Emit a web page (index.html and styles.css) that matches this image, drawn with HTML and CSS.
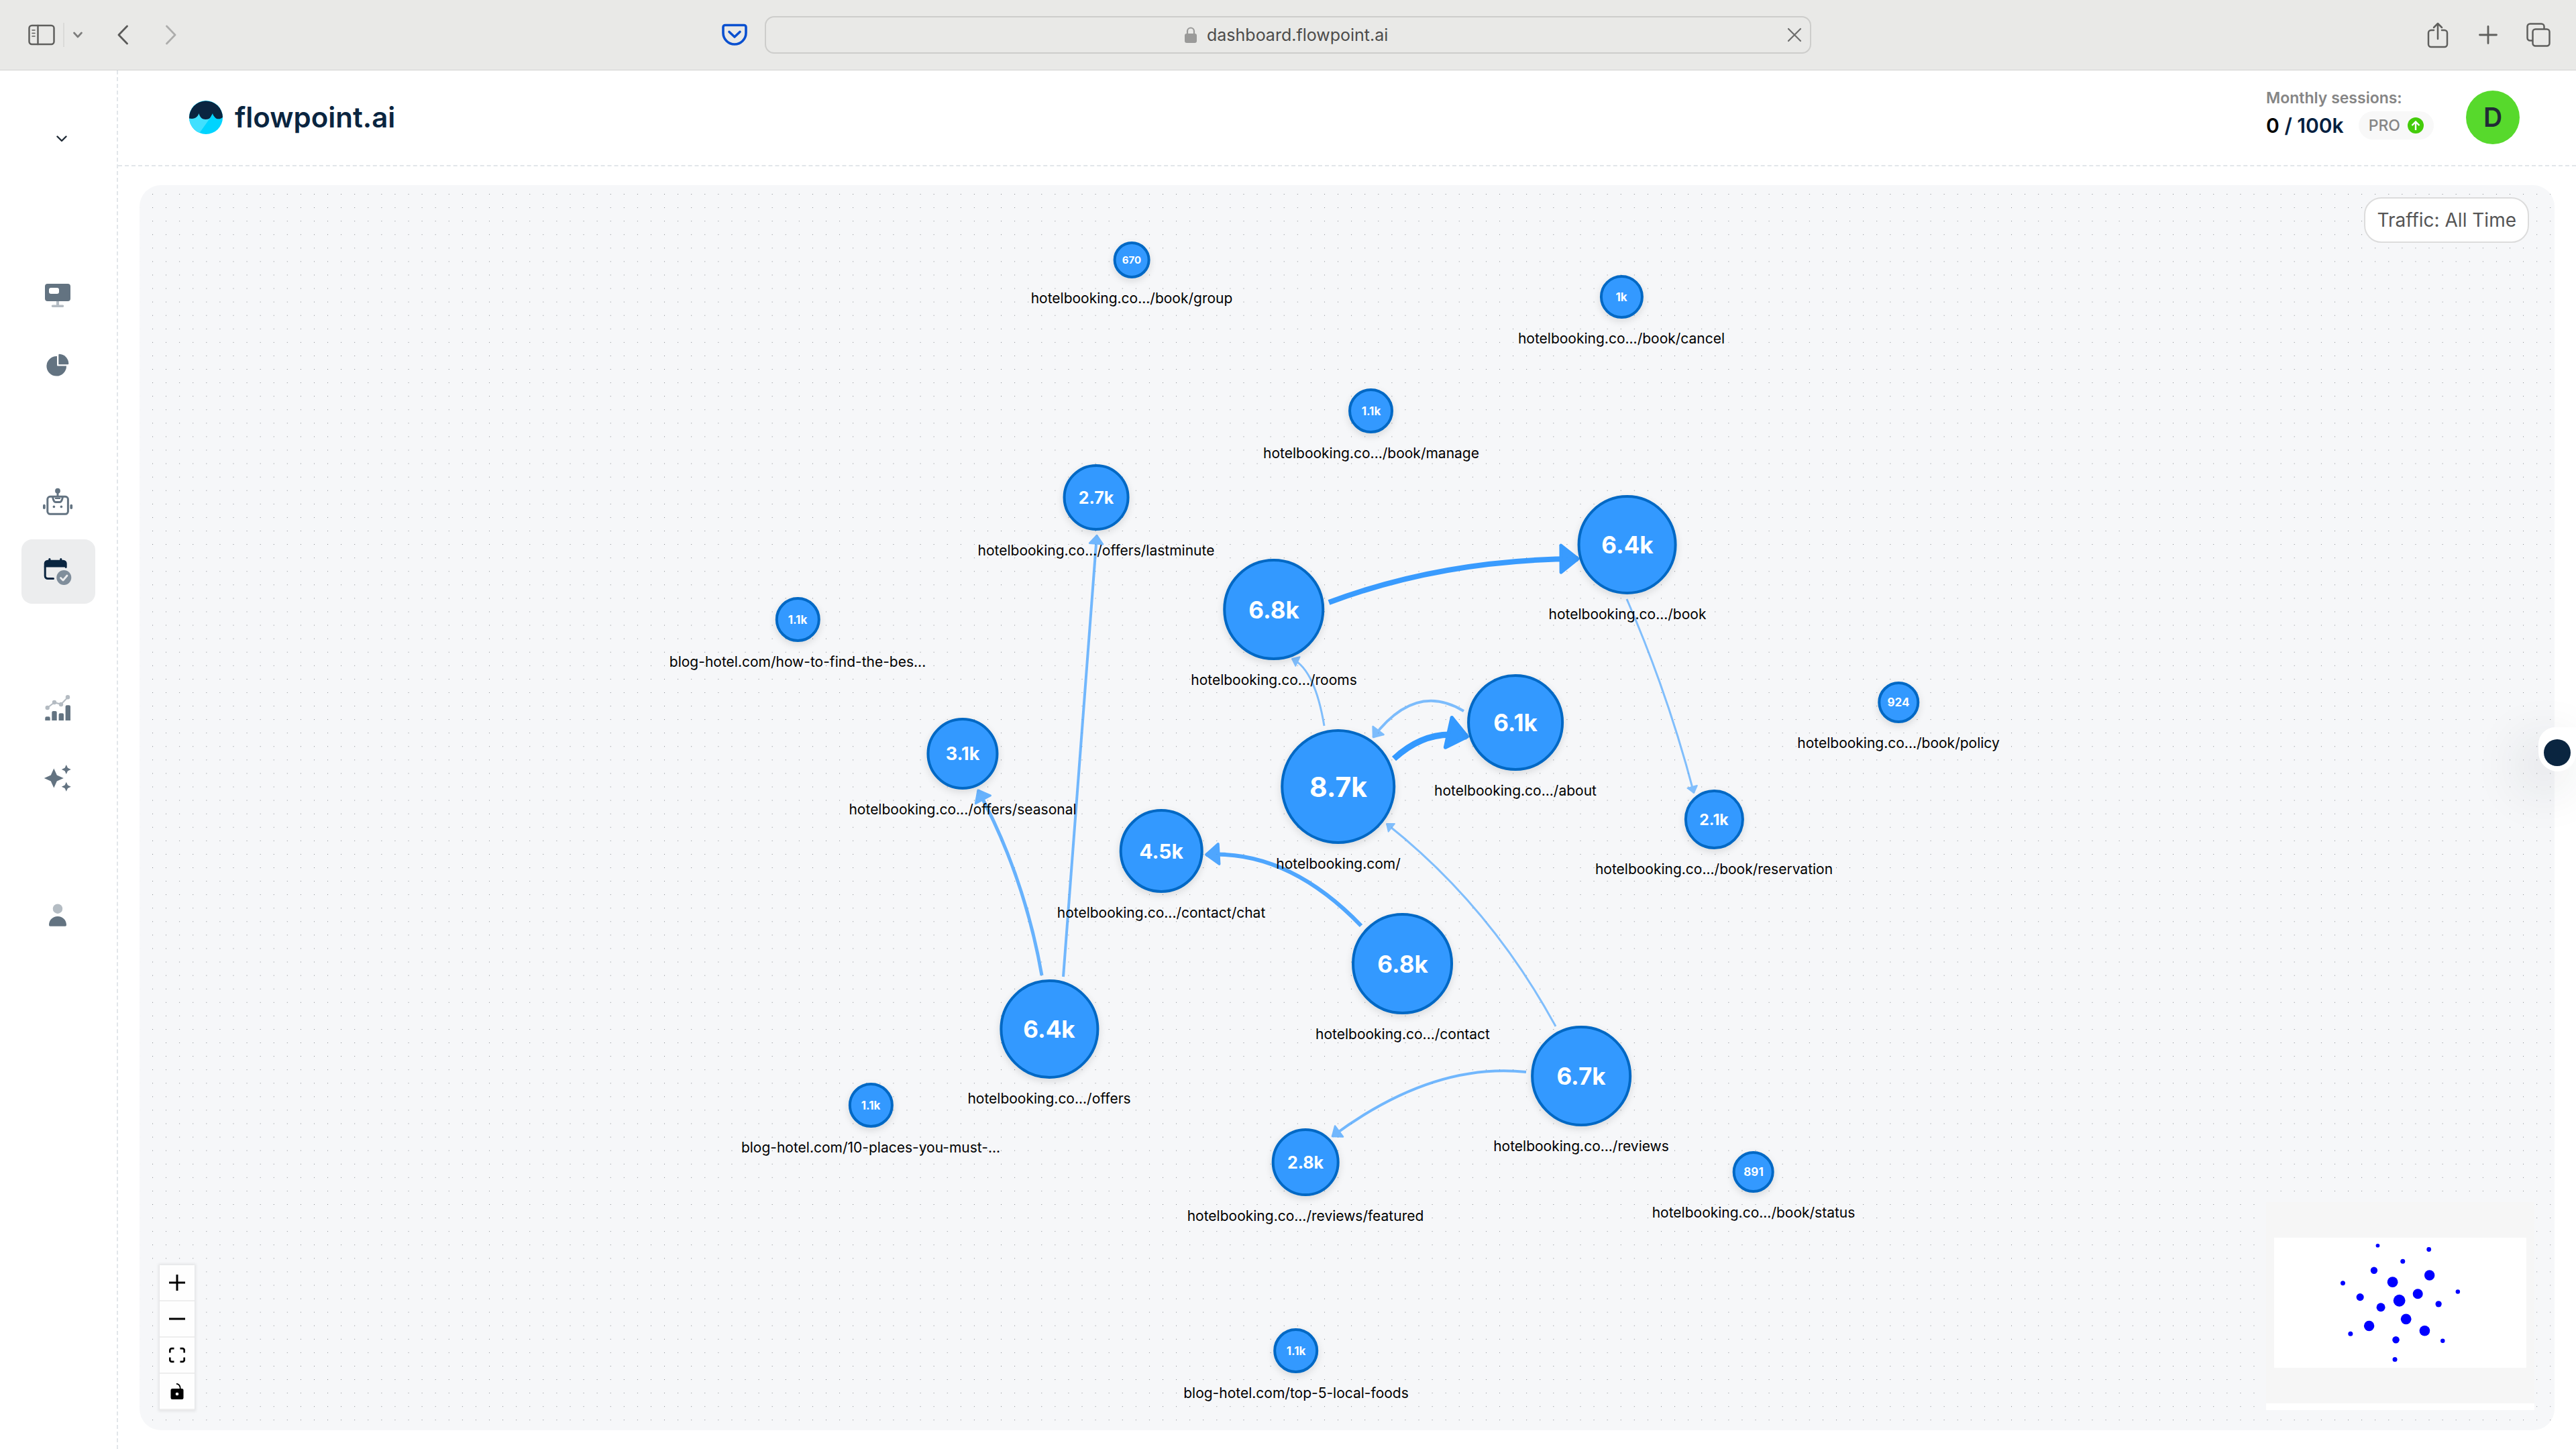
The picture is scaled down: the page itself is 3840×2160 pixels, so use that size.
FILE: index.html
```html
<!DOCTYPE html>
<html lang="en">
<head>
    <meta charset="UTF-8">
    <meta name="viewport" content="width=device-width, initial-scale=1.0">
    <title>flowpoint.ai</title>
    <link rel="stylesheet" href="styles.css">
</head>
<body>
    <!-- Browser toolbar -->
    <div class="toolbar">
        <div class="toolbar-left">
            <button class="tool" aria-label="Show sidebar">
                <svg width="40" height="32" viewBox="0 0 40 32" fill="none" stroke="#5f5f5d" stroke-width="2.5" stroke-linecap="round"><rect x="1.5" y="2" width="37" height="28" rx="4"/><path d="M14.5 2v28"/><path d="M6 9h4M6 13.5h4M6 18h4" stroke-width="1.6"/></svg>
            </button>
            <span class="tool-divider"></span>
            <button class="tool tool-chevron" aria-label="Tab groups">
                <svg width="14" height="10" viewBox="0 0 14 10" fill="none" stroke="#7d7d7c" stroke-width="2.6" stroke-linecap="round" stroke-linejoin="round"><path d="M1.5 2L7 8l5.5-6"/></svg>
            </button>
            <button class="tool tool-back" aria-label="Back">
                <svg width="16" height="30" viewBox="0 0 16 30" fill="none" stroke="#5a5a59" stroke-width="2.8" stroke-linecap="round" stroke-linejoin="round"><path d="M14.5 2L2 15l12.5 13"/></svg>
            </button>
            <button class="tool tool-forward" aria-label="Forward">
                <svg width="16" height="30" viewBox="0 0 16 30" fill="none" stroke="#adadac" stroke-width="2.8" stroke-linecap="round" stroke-linejoin="round"><path d="M1.5 2L14 15L1.5 28"/></svg>
            </button>
            <button class="tool tool-pocket" aria-label="Save to Pocket">
                <svg width="38" height="34" viewBox="0 0 38 34" fill="none" stroke="#0a50d0" stroke-width="3.6" stroke-linecap="round" stroke-linejoin="round"><path d="M5 2.5h28a3 3 0 0 1 3 3V14a17 17 0 0 1-34 0V5.5a3 3 0 0 1 3-3z"/><path d="M11 12.5l8 7.500l8-7.500"/></svg>
            </button>
        </div>
        <div class="address">
            <svg width="20" height="26" viewBox="0 0 20 26"><path d="M5 12V7.500a5 5 0 0 1 10 0V12" fill="none" stroke="#9a9a99" stroke-width="2.200"/><rect x="1" y="11" width="18" height="14" rx="3" fill="#9a9a99"/></svg>
            <input class="address-input" type="text" value="dashboard.flowpoint.ai" aria-label="Address">
            <button class="tool address-clear" aria-label="Stop loading">
                <svg width="22" height="22" viewBox="0 0 22 22" stroke="#6c6c6b" stroke-width="2.200" stroke-linecap="round"><path d="M2 2l18 18M20 2L2 20"/></svg>
            </button>
        </div>
        <div class="toolbar-right">
            <button class="tool" aria-label="Share">
                <svg width="36" height="40" viewBox="0 0 36 40" fill="none" stroke="#5f5f5d" stroke-width="2.500" stroke-linecap="round" stroke-linejoin="round"><path d="M12 13H8a4 4 0 0 0-4 4v17a4 4 0 0 0 4 4h20a4 4 0 0 0 4-4V17a4 4 0 0 0-4-4h-4M18 26V3M12 9l6-6l6 6"/></svg>
            </button>
            <button class="tool" aria-label="New tab">
                <svg width="36" height="36" viewBox="0 0 36 36" stroke="#5f5f5d" stroke-width="2.800" stroke-linecap="round"><path d="M18 5.500v25M5.500 18h25"/></svg>
            </button>
            <button class="tool" aria-label="Tab overview">
                <svg width="36" height="36" viewBox="0 0 36 36" fill="none" stroke="#5f5f5d" stroke-width="2.500"><rect x="9.500" y="9.500" width="25" height="25" rx="4"/><path d="M9.500 26.500H5.500a4 4 0 0 1-4-4V5.500a4 4 0 0 1 4-4h17a4 4 0 0 1 4 4v4"/></svg>
            </button>
        </div>
    </div>

    <div class="app">
        <!-- Sidebar -->
        <aside class="sidebar">
            <button class="site-picker" aria-label="Choose site">
                <svg width="16" height="10" viewBox="0 0 16 10" fill="none" stroke="#212b36" stroke-width="2.400" stroke-linecap="round" stroke-linejoin="round"><path d="M1.500 1.500L8 8l6.500-6.500"/></svg>
            </button>
            <nav class="nav">
                <div class="nav-group">
                    <a class="nav-item" href="#dashboard" aria-label="Dashboard">
                        <svg class="icon" viewBox="0 0 44 44"><path class="soft" d="M19 31h4v5.500h5.500a1.700 1.700 0 0 1 0 3.500h-15a1.700 1.700 0 0 1 0-3.500H19z"/><path fill-rule="evenodd" d="M6 5h30a4 4 0 0 1 4 4v18a4 4 0 0 1-4 4H6a4 4 0 0 1-4-4V9a4 4 0 0 1 4-4zM11 11a3 3 0 0 0-3 3v3a3 3 0 0 0 3 3h9a3 3 0 0 0 3-3v-3a3 3 0 0 0-3-3z"/></svg>
                    </a>
                    <a class="nav-item" href="#analytics" aria-label="Analytics">
                        <svg class="icon" viewBox="0 0 44 44"><path d="M20 9A14.800 14.800 0 1 0 34 23.500H21a1 1 0 0 1-1-1z"/><path d="M22.300 7a1.300 1.300 0 0 1 1.300-1.300A14.500 14.500 0 0 1 37.300 20a1.300 1.300 0 0 1-1.300 1.300H22.300z"/></svg>
                    </a>
                </div>
                <div class="nav-group">
                    <a class="nav-item" href="#assistant" aria-label="Assistant">
                        <svg class="icon" viewBox="0 0 44 44"><g fill="none" stroke="#637381" stroke-width="3"><rect x="5.800" y="14.300" width="30.600" height="26" rx="4"/><path d="M13.500 14.500c.8 5 2.500 8 4.500 8h6c2 0 3.700-3 4.500-8M21 8v6"/><path d="M17 17h8" stroke-width="2"/></g><circle cx="21" cy="5.700" r="3.900"/><circle cx="15.400" cy="29.400" r="1.800"/><circle cx="26.400" cy="29.400" r="1.800"/><rect x="-1" y="25.700" width="3.700" height="7.400" rx="1.800"/><rect x="39.400" y="25.700" width="3.700" height="7.400" rx="1.800"/></svg>
                    </a>
                    <a class="nav-item active" href="#flow" aria-label="Flow" aria-current="page">
                        <svg class="icon" viewBox="0 0 44 44"><path d="M.7 15.500V10a5.300 5.300 0 0 1 5.300-5.300h1.300V3.500a1.600 1.600 0 0 1 3.200 0v1.200h13.700V3.500a1.600 1.600 0 0 1 3.200 0v1.200h2A5.300 5.300 0 0 1 34.700 10v5.300a1.500 1.500 0 0 1-3 .2z"/><path d="M2.200 15v13.500a4 4 0 0 0 4 4h8.300" fill="none" stroke="#0a2540" stroke-width="3" stroke-linecap="round"/><circle class="soft" cx="30.300" cy="31" r="11"/><path d="M25.500 31.500l3.500 3.500l6-7" fill="none" stroke="#ecedee" stroke-width="2.800" stroke-linecap="round" stroke-linejoin="round"/></svg>
                    </a>
                </div>
                <div class="nav-group">
                    <a class="nav-item" href="#reports" aria-label="Reports">
                        <svg class="icon" viewBox="0 0 44 44"><path d="M2.300 40v-3.700a2 2 0 0 1 2-2h3.400a2 2 0 0 1 2 2V40zM12.300 40V28a2 2 0 0 1 2-2h3.400a2 2 0 0 1 2 2v12zM22.600 40v-8.700a2 2 0 0 1 2-2H28a2 2 0 0 1 2 2V40zM32.600 40V19.300a2 2 0 0 1 2-2H38a2 2 0 0 1 2 2V40z"/><g class="soft"><path d="M5.700 21L16 13.200l10 2.600l10-10.300" fill="none" stroke="#637381" stroke-width="2"/><circle cx="5.700" cy="21" r="3.200"/><circle cx="16" cy="13" r="3.200"/><circle cx="26" cy="16" r="3.200"/><circle cx="36" cy="5.300" r="3.200"/></g></svg>
                    </a>
                    <a class="nav-item" href="#insights" aria-label="Insights">
                        <svg class="icon" viewBox="0 0 44 44"><path d="M15.300 7.500l4.500 10l10 4.500l-10 4.500l-4.500 10l-4.500-10l-10-4.500l10-4.500zM33.800 2l2.200 4.800l4.800 2.200l-4.800 2.200l-2.200 4.800l-2.200-4.800l-4.800-2.200l4.800-2.200zM33.800 27.700l2.200 4.800l4.800 2.200l-4.800 2.200l-2.200 4.800l-2.200-4.800l-4.800-2.200l4.800-2.200z"/></svg>
                    </a>
                </div>
                <div class="nav-group">
                    <a class="nav-item" href="#account" aria-label="Account">
                        <svg class="icon" viewBox="0 0 44 44"><circle class="soft" cx="21" cy="12.700" r="7.200"/><path d="M8 37c0-7.500 5.500-13 13-13s13 5.500 13 13a1.800 1.800 0 0 1-1.800 1.800H9.800A1.800 1.800 0 0 1 8 37z"/></svg>
                    </a>
                </div>
            </nav>
        </aside>

        <main class="main">
            <header class="header">
                <a class="logo" href="#home">
                    <svg width="50" height="50" viewBox="0 0 50 50"><circle cx="25" cy="25" r="25" fill="#00d4ff"/><path d="M34 22L15.500 48A25 25 0 0 1 0 27l14-9z" fill="#40e0ff"/><path d="M0 26.500A25 25 0 1 1 50 24.500c-2 3-9 4.500-12 0c-1.500-2-2.500-3-3-5.500c-1 2-2 3.500-3 5.500c-2 4.500-12 5-15 0c-1.500-2-2-3.500-2.500-5.500c-1.500 5-6 9.500-14.500 7.500z" fill="#0a2540"/></svg>
                    <span>flowpoint.ai</span>
                </a>
                <div class="account">
                    <div class="sessions">
                        <div class="sessions-title">Monthly sessions:</div>
                        <div class="sessions-row">
                            <div class="sessions-count"><span>0</span> / 100k</div>
                            <button class="plan">PRO
                                <svg width="24" height="24" viewBox="0 0 24 24"><circle cx="12" cy="12" r="12" fill="#44cc0a"/><path d="M12 19V6.500M6.500 12L12 6.500l5.500 5.500" fill="none" stroke="#fff" stroke-width="2.400"/></svg>
                            </button>
                        </div>
                    </div>
                    <button class="avatar">D</button>
                </div>
            </header>

            <!-- Flow canvas -->
            <section class="flow">
                <svg class="flow-dots" aria-hidden="true">
                    <defs>
                        <pattern id="dots" x="19" y="13" width="20.080" height="20.080" patternUnits="userSpaceOnUse">
                            <rect width="1" height="1" fill="#81858a"/>
                        </pattern>
                    </defs>
                    <rect width="100%" height="100%" fill="url(#dots)"/>
                </svg>

                <svg class="flow-edges" aria-hidden="true">
                    <defs>
                        <marker id="arrow" viewBox="-10 -10 20 20" refX="0" refY="0" markerWidth="12.500" markerHeight="12.500" orient="auto">
                            <polyline points="-5,-4 0,0 -5,4 -5,-4" fill="#3399ff" stroke="#3399ff" stroke-width="1" stroke-linecap="round" stroke-linejoin="round"/>
                        </marker>
                    </defs>
                    <g id="edges"></g>
                </svg>

                <div id="nodes"></div>

                <button class="traffic">Traffic: All Time</button>

                <div class="controls">
                    <button aria-label="Zoom in"><svg viewBox="0 0 24 24"><path d="M10.500 0h3v10.500H24v3H13.500V24h-3V13.500H0v-3h10.500z"/></svg></button>
                    <button aria-label="Zoom out"><svg viewBox="0 0 24 24"><path d="M0 10.500h24v3H0z"/></svg></button>
                    <button aria-label="Fit view"><svg viewBox="0 0 24 24"><path d="M7.500 2.200H4A2.600 2.600 0 0 0 1.300 5v3.500M16.500 2.200H20A2.600 2.600 0 0 1 22.700 5v3.500M7.500 21.800H4A2.600 2.600 0 0 1 1.300 19v-3.500M16.500 21.800H20a2.600 2.600 0 0 0 2.700-2.800v-3.500" fill="none" stroke="#000" stroke-width="2.700"/></svg></button>
                    <button aria-label="Toggle interactivity"><svg viewBox="0 0 24 24"><path d="M11 .8c4 .2 5.800 3 5.800 8" fill="none" stroke="#000" stroke-width="1.800"/><path fill-rule="evenodd" d="M5 8h14a2.500 2.500 0 0 1 2.500 2.500v11A2.500 2.500 0 0 1 19 24H5a2.500 2.500 0 0 1-2.500-2.500v-11A2.500 2.500 0 0 1 5 8zm7 5.700a2.300 2.300 0 1 0 0 4.600a2.300 2.300 0 0 0 0-4.600z"/></svg></button>
                </div>

                <div class="minimap">
                    <svg viewBox="-115 -508 3830 2872" aria-label="Mini map">
                        <rect x="-115" y="-508" width="3830" height="2872" fill="#f6f6f6"/>
                        <rect width="3600" height="1856" fill="#fff"/>
                        <g id="minimapNodes" fill="#0000ff"></g>
                    </svg>
                </div>
            </section>
        </main>
    </div>

    <button class="helper" aria-label="Open helper"><span></span></button>

    <script src="script.js"></script>
</body>
</html>
```

FILE: styles.css
```css
* {
    box-sizing: border-box;
}

body {
    margin: 0;
    min-height: 100vh;
    display: flex;
    flex-direction: column;
    overflow-x: hidden;
    background-color: #fff;
    font-family: Inter, sans-serif;
}

button {
    padding: 0;
    border: none;
    background: none;
    font-family: inherit;
    cursor: pointer;
}

svg {
    display: block;
}

/* Browser toolbar */
.toolbar {
    display: grid;
    grid-template-columns: 19fr 26fr 19fr;
    align-items: center;
    height: 105px;
    background-color: #e9e9e7;
    border-bottom: 1px solid #d2d2d1;
}

.toolbar-left,
.toolbar-right {
    display: flex;
    align-items: center;
}

.toolbar-left {
    padding: 0 26px 0 42px;
}

.toolbar-right {
    justify-content: flex-end;
    gap: 39px;
    padding-right: 38px;
}

.tool-divider {
    width: 2px;
    height: 36px;
    margin-left: 12px;
    background-color: #dadad8;
}

.tool-chevron {
    margin-left: 13px;
}

.tool-back {
    margin-left: 52px;
}

.tool-forward {
    margin-left: 56px;
}

.tool-pocket {
    margin-left: auto;
}

.address {
    position: relative;
    display: flex;
    justify-content: center;
    align-items: center;
    gap: 14px;
    height: 56px;
    border: 2px solid #cdcdcb;
    border-radius: 14px;
}

.address-input {
    width: 276px;
    padding: 0;
    border: none;
    outline: none;
    background: none;
    color: #4c4c4b;
    font-family: inherit;
    font-size: 25px;
}

.address-clear {
    position: absolute;
    right: 12px;
}

/* App */
.app {
    flex: 1;
    display: flex;
}

.sidebar {
    width: 176px;
    padding: 80px 32px 0;
    border-right: 2px dashed #e2e6ea;
}

.site-picker {
    display: flex;
    justify-content: center;
    align-items: center;
    width: 100%;
    height: 44px;
    padding-left: 10px;
}

.nav {
    display: flex;
    flex-direction: column;
    gap: 108px;
    margin-top: 163px;
}

.nav-group {
    display: flex;
    flex-direction: column;
    gap: 8px;
}

.nav-item {
    display: flex;
    justify-content: center;
    align-items: center;
    height: 96px;
    border-radius: 16px;
}

.nav-item.active {
    background-color: #ecedee;
}

.icon {
    width: 44px;
    height: 44px;
    overflow: visible;
    fill: #637381;
}

.active .icon {
    fill: #0a2540;
}

.soft {
    opacity: 0.48;
}

.main {
    flex: 1;
    display: flex;
    flex-direction: column;
}

/* Header */
.header {
    display: flex;
    justify-content: space-between;
    align-items: center;
    height: 143px;
    padding: 0 84px 2px 106px;
    border-bottom: 2px dashed #e2e6ea;
}

.logo {
    display: flex;
    align-items: center;
    gap: 18px;
    color: #0a2540;
    font-size: 42px;
    font-weight: 600;
    text-decoration: none;
}

.account {
    display: flex;
    align-items: center;
    gap: 48px;
}

.sessions {
    padding-bottom: 12px;
}

.sessions-title {
    margin-bottom: 4px;
    color: #858585;
    font-size: 23px;
    font-weight: 600;
    line-height: 32px;
}

.sessions-row {
    display: flex;
    align-items: center;
    gap: 22px;
}

.sessions-count {
    color: #03203f;
    font-size: 30px;
    font-weight: 600;
}

.sessions-count span {
    color: #000;
}

.plan {
    display: flex;
    align-items: center;
    gap: 11px;
    height: 42px;
    padding: 0 15px;
    border-radius: 21px;
    background-color: #f8f8f8;
    color: #858585;
    font-size: 23px;
    font-weight: 500;
}

.avatar {
    width: 80px;
    height: 80px;
    border-radius: 50%;
    background-color: #57d92c;
    color: #212b36;
    font-size: 39px;
    font-weight: 600;
}

/* Flow canvas */
.flow {
    position: relative;
    flex: 1;
    min-height: 1856px;
    margin: 28px 32px;
    border-radius: 32px;
    background-color: #f6f7f9;
    overflow: hidden;
}

.flow-dots,
.flow-edges {
    position: absolute;
    width: 100%;
    height: 100%;
}

.flow-edges path {
    fill: none;
    stroke: #3399ff;
}

.node {
    position: absolute;
    display: flex;
    flex-direction: column;
    align-items: center;
    gap: 14px;
    transform: translateX(-50%);
}

.node-circle {
    display: flex;
    justify-content: center;
    align-items: center;
    border: 4px solid #0068c4;
    border-radius: 50%;
    background-color: #3399ff;
    box-shadow: 0 4px 12px rgba(0, 0, 0, 0.12);
    color: #fff;
    font-weight: 700;
}

.node-label {
    color: #000;
    font-size: 21px;
    font-weight: 400;
    line-height: 32px;
    white-space: nowrap;
}

.traffic {
    position: absolute;
    top: 18px;
    right: 38px;
    height: 68px;
    padding: 0 17px;
    border: 2px solid #dcdcdc;
    border-radius: 26px;
    background-color: #fff;
    color: #555;
    font-size: 28px;
    font-weight: 400;
}

.controls {
    position: absolute;
    left: 30px;
    bottom: 30px;
    box-shadow: 0 0 4px 2px rgba(0, 0, 0, 0.08);
}

.controls button {
    display: flex;
    justify-content: center;
    align-items: center;
    width: 52px;
    height: 54px;
    border-bottom: 2px solid #eee;
    background-color: #fefefe;
}

.controls svg {
    width: 24px;
    height: 24px;
}

.minimap {
    position: absolute;
    right: 30px;
    bottom: 30px;
    width: 400px;
    padding-bottom: 10px;
    background-color: #fff;
}

/* Helper tab on the right edge */
.helper {
    position: fixed;
    top: 1084px;
    right: 0;
    display: flex;
    align-items: center;
    width: 56px;
    height: 66px;
    padding: 10px 0 0 8px;
    border-radius: 28px 0 30px 32px;
    background-color: #fff;
    box-shadow: -20px 24px 80px rgba(33, 43, 54, 0.16);
}

.helper span {
    width: 40px;
    height: 40px;
    border-radius: 50%;
    background-color: #0a2540;
}
```

FILE: script.js
```js
// x, y: circle centre on the canvas, size: diameter
const nodes = [
    { x: 1479, y: 112, size: 55, font: 15, value: '670', label: 'hotelbooking.co.../book/group' },
    { x: 2209, y: 167, size: 65, font: 17, value: '1k', label: 'hotelbooking.co.../book/cancel' },
    { x: 1836, y: 337, size: 67, font: 17, value: '1.1k', label: 'hotelbooking.co.../book/manage' },
    { x: 1426, y: 466, size: 99, font: 25, value: '2.7k', label: 'hotelbooking.co.../offers/lastminute' },
    { x: 2218, y: 536, size: 148, font: 35, value: '6.4k', label: 'hotelbooking.co.../book' },
    { x: 1691, y: 633, size: 151, font: 35, value: '6.8k', label: 'hotelbooking.co.../rooms' },
    { x: 981, y: 648, size: 67, font: 17, value: '1.1k', label: 'blog-hotel.com/how-to-find-the-bes...' },
    { x: 2051, y: 801, size: 144, font: 35, value: '6.1k', label: 'hotelbooking.co.../about' },
    { x: 2622, y: 771, size: 62, font: 17, value: '924', label: 'hotelbooking.co.../book/policy' },
    { x: 1227, y: 848, size: 107, font: 27, value: '3.1k', label: 'hotelbooking.co.../offers/seasonal' },
    { x: 1787, y: 897, size: 171, font: 41, value: '8.7k', label: 'hotelbooking.com/' },
    { x: 2347, y: 946, size: 89, font: 23, value: '2.1k', label: 'hotelbooking.co.../book/reservation' },
    { x: 1523, y: 993, size: 125, font: 30, value: '4.5k', label: 'hotelbooking.co.../contact/chat' },
    { x: 1883, y: 1161, size: 151, font: 35, value: '6.8k', label: 'hotelbooking.co.../contact' },
    { x: 1356, y: 1258, size: 148, font: 35, value: '6.4k', label: 'hotelbooking.co.../offers' },
    { x: 2149, y: 1328, size: 150, font: 35, value: '6.7k', label: 'hotelbooking.co.../reviews' },
    { x: 1090, y: 1372, size: 67, font: 17, value: '1.1k', label: 'blog-hotel.com/10-places-you-must-...' },
    { x: 1738, y: 1457, size: 101, font: 25, value: '2.8k', label: 'hotelbooking.co.../reviews/featured' },
    { x: 2406, y: 1471, size: 62, font: 17, value: '891', label: 'hotelbooking.co.../book/status' },
    { x: 1724, y: 1738, size: 67, font: 17, value: '1.1k', label: 'blog-hotel.com/top-5-local-foods' }
];

// busier routes are wider and more opaque
const edges = [
    { d: 'M1773 622 Q1944 558 2144 557', width: 8, opacity: 0.97 },
    { d: 'M2217 617 Q2278 757 2317 906', width: 3, opacity: 0.6 },
    { d: 'M1766 806 Q1752 722 1718 706', width: 3, opacity: 0.6 },
    { d: 'M1974 784 Q1902 740 1839 823', width: 4, opacity: 0.62 },
    { d: 'M1870 855 Q1920 809 1979 822', width: 9, opacity: 1 },
    { d: 'M2111 1254 Q2013 1074 1859 952', width: 3, opacity: 0.6 },
    { d: 'M1821 1104 Q1712 991 1590 998', width: 6, opacity: 0.85 },
    { d: 'M1345 1178 Q1319 1030 1250 902', width: 5, opacity: 0.73 },
    { d: 'M1377 1180 L1427 522', width: 4, opacity: 0.68 },
    { d: 'M2067 1322 Q1927 1307 1778 1418', width: 4, opacity: 0.68 }
];

const svgNs = 'http://www.w3.org/2000/svg';

nodes.forEach(node => {
    const el = document.createElement('div');
    el.className = 'node';
    el.style.left = node.x + 'px';
    el.style.top = (node.y - Math.round(node.size / 2)) + 'px';

    const circle = document.createElement('div');
    circle.className = 'node-circle';
    circle.style.width = node.size + 'px';
    circle.style.height = node.size + 'px';
    circle.style.fontSize = node.font + 'px';
    circle.textContent = node.value;

    const label = document.createElement('div');
    label.className = 'node-label';
    label.textContent = node.label;

    el.append(circle, label);
    document.getElementById('nodes').appendChild(el);

    const dot = document.createElementNS(svgNs, 'circle');
    dot.setAttribute('cx', node.x);
    dot.setAttribute('cy', node.y);
    dot.setAttribute('r', node.size / 2);
    document.getElementById('minimapNodes').appendChild(dot);
});

edges.forEach(edge => {
    const path = document.createElementNS(svgNs, 'path');
    path.setAttribute('d', edge.d);
    path.setAttribute('stroke-width', edge.width);
    path.setAttribute('opacity', edge.opacity);
    path.setAttribute('marker-end', 'url(#arrow)');
    document.getElementById('edges').appendChild(path);
});
```
